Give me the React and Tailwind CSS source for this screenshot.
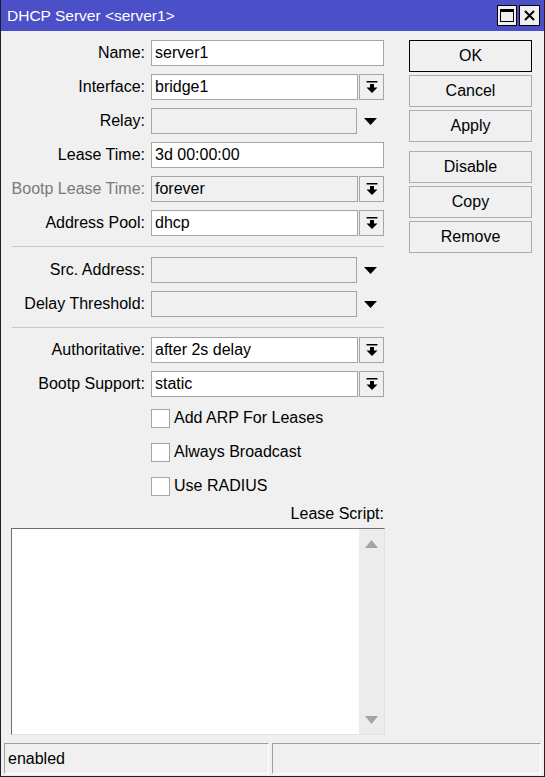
import React from 'react';

const DropIcon = () => (
    <svg width="12" height="12" viewBox="0 0 12 12">
        <rect x="0.5" y="0" width="11" height="1.5" fill="#000" />
        <rect x="4" y="3" width="4" height="4" fill="#000" />
        <polygon points="0.5,6.5 11.5,6.5 6,12" fill="#000" />
    </svg>
);

const Triangle = () => (
    <svg width="13" height="7" viewBox="0 0 13 7">
        <polygon points="0,0 13,0 6.5,7" fill="#000" />
    </svg>
);

const Label = ({ children, muted }) => (
    <div className={`w-[134px] shrink-0 text-right mr-[6px] ${muted ? 'text-[#7a7a7a]' : 'text-black'}`}>{children}</div>
);

const TextRow = ({ label, value }) => (
    <div className="flex items-center h-[26px]">
        <Label>{label}</Label>
        <div className="w-[233px] h-[26px] bg-white border border-[#a5a5a5] px-[3px] flex items-center">{value}</div>
    </div>
);

const ComboRow = ({ label, value, muted, disabled }) => (
    <div className="flex items-center h-[26px]">
        <Label muted={muted}>{label}</Label>
        <div className={`w-[207px] h-[26px] border border-[#a5a5a5] px-[3px] flex items-center ${disabled ? 'bg-[#f0f0f0]' : 'bg-white'}`}>{value}</div>
        <div className="ml-[1px] w-[25px] h-[26px] border border-[#a5a5a5] bg-[#f0f0f0] flex items-center justify-center">
            <DropIcon />
        </div>
    </div>
);

const EmptyRow = ({ label }) => (
    <div className="flex items-center h-[26px]">
        <Label>{label}</Label>
        <div className="w-[206px] h-[26px] border border-[#a5a5a5] bg-[#f0f0f0]" />
        <div className="w-[27px] flex items-center justify-center">
            <Triangle />
        </div>
    </div>
);

const CheckRow = ({ label }) => (
    <div className="flex items-center h-[26px] pl-[140px]">
        <div className="w-[19px] h-[19px] bg-white border border-[#a5a5a5] mr-[4px]" />
        <span>{label}</span>
    </div>
);

const Separator = () => <div className="ml-[1px] w-[372px] h-px bg-[#c8c8c8] my-[1px]" />;

const WinButton = ({ children, primary, className = '' }) => (
    <button className={`w-[123px] h-[32px] bg-[#f0f0f0] border ${primary ? 'border-black' : 'border-[#adadad]'} text-black flex items-center justify-center ${className}`}>
        {children}
    </button>
);

export default function App() {
    return (
        <div
            className="w-[545px] h-[777px] bg-[#f0f0f0] border border-[#1e1e1e] border-t-0 flex flex-col text-[16px] leading-none text-black select-none"
            style={{ fontFamily: '"Liberation Sans", Arial, sans-serif' }}
        >
            {/* Title bar */}
            <div className="h-[31px] bg-[#4b50c9] flex items-center pl-[6px] pr-[4px] shrink-0">
                <span className="text-white text-[15.5px] flex-1">DHCP Server &lt;server1&gt;</span>
                <div className="flex gap-[2px]">
                    <div className="w-[20px] h-[21px] bg-[#f0f0f0] border border-black flex items-center justify-center">
                        <div className="w-[14px] h-[13px] border border-black border-t-[3px]" />
                    </div>
                    <div className="w-[21px] h-[21px] bg-[#f0f0f0] border border-black flex items-center justify-center">
                        <svg width="11" height="11" viewBox="0 0 11 11">
                            <path d="M1 1 L10 10 M10 1 L1 10" stroke="#000" strokeWidth="2" />
                        </svg>
                    </div>
                </div>
            </div>

            {/* Body */}
            <div className="flex flex-1 pt-[9px] pl-[10px] min-h-0">
                <div className="flex flex-col">
                    <div className="flex flex-col gap-[8px]">
                        <TextRow label="Name:" value="server1" />
                        <ComboRow label="Interface:" value="bridge1" />
                        <EmptyRow label="Relay:" />
                        <TextRow label="Lease Time:" value="3d 00:00:00" />
                        <ComboRow label="Bootp Lease Time:" value="forever" muted disabled />
                        <ComboRow label="Address Pool:" value="dhcp" />
                    </div>
                    <div className="my-[9px]"><Separator /></div>
                    <div className="flex flex-col gap-[8px]">
                        <EmptyRow label="Src. Address:" />
                        <EmptyRow label="Delay Threshold:" />
                    </div>
                    <div className="mt-[9px] mb-[8px]"><Separator /></div>
                    <div className="flex flex-col gap-[8px]">
                        <ComboRow label="Authoritative:" value="after 2s delay" />
                        <ComboRow label="Bootp Support:" value="static" />
                        <CheckRow label="Add ARP For Leases" />
                        <CheckRow label="Always Broadcast" />
                        <CheckRow label="Use RADIUS" />
                    </div>
                    <div className="w-[373px] text-right mt-[7px] h-[16px]">Lease Script:</div>
                    <div className="mt-[6px] w-[374px] h-[207px] bg-white border border-[#6e6e6e] border-r-[#e3e3e3] border-b-[#e3e3e3] flex">
                        <div className="flex-1" />
                        <div className="w-[25px] bg-[#ececec] flex flex-col items-center justify-between pt-[11px] pb-[10px]">
                            <svg width="13" height="8" viewBox="0 0 13 8"><polygon points="0,8 13,8 6.5,0" fill="#a3a3a3" /></svg>
                            <svg width="13" height="8" viewBox="0 0 13 8"><polygon points="0,0 13,0 6.5,8" fill="#a3a3a3" /></svg>
                        </div>
                    </div>
                </div>

                {/* Buttons */}
                <div className="ml-[24px] flex flex-col">
                    <WinButton primary>OK</WinButton>
                    <WinButton className="mt-[3px]">Cancel</WinButton>
                    <WinButton className="mt-[3px]">Apply</WinButton>
                    <WinButton className="mt-[9px]">Disable</WinButton>
                    <WinButton className="mt-[3px]">Copy</WinButton>
                    <WinButton className="mt-[3px]">Remove</WinButton>
                </div>
            </div>

            {/* Status bar */}
            <div className="h-[31px] mb-[2px] flex gap-[3px] px-[3px] shrink-0">
                <div className="w-[265px] h-full border border-[#a0a0a0] border-r-white border-b-white flex items-center pl-[3px]">enabled</div>
                <div className="flex-1 h-full border border-[#a0a0a0] border-r-white border-b-white" />
            </div>
        </div>
    );
}
